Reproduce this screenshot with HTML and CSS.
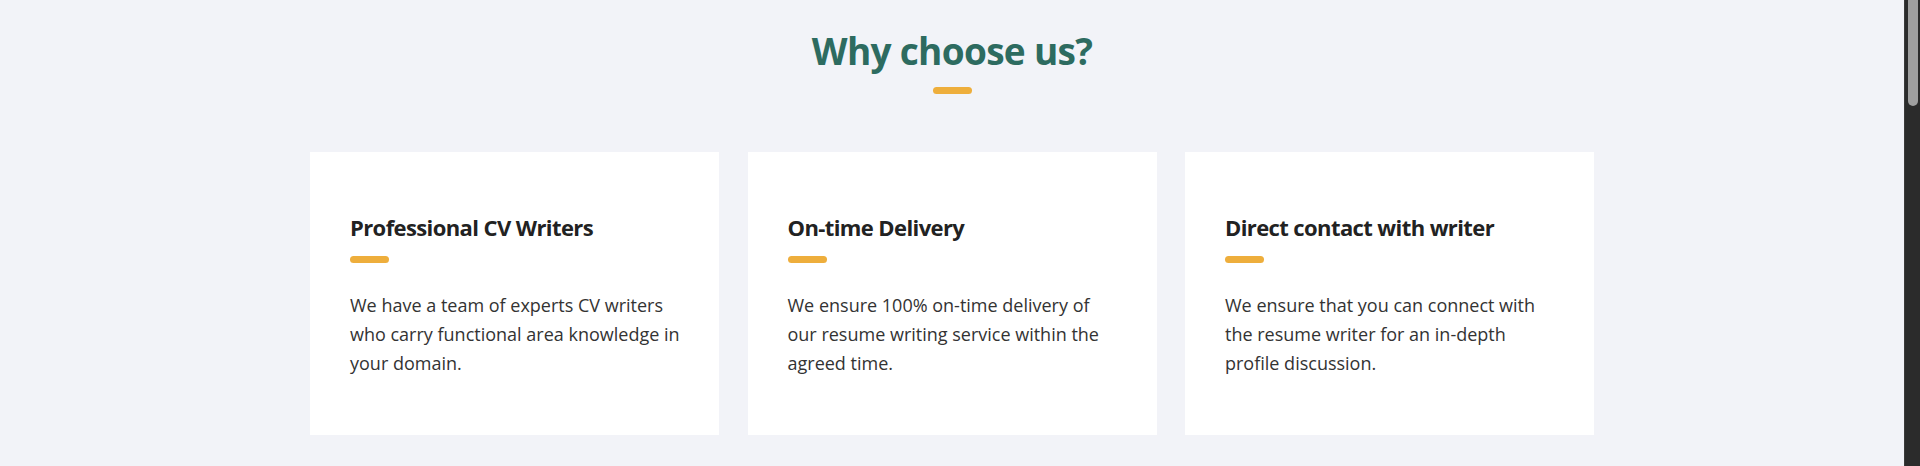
FILE: index.html
```html
<!DOCTYPE html>
<html lang="en">
<head>
<meta charset="utf-8">
<title>Why choose us?</title>
<link rel="stylesheet" href="styles.css">
</head>
<body>
<section class="why">
  <div class="why-head">
    <h2 class="why-title">Why choose us?</h2>
    <span class="bar"></span>
  </div>
  <div class="cards">
    <div class="card">
      <h3 class="card-title">Professional CV Writers</h3>
      <span class="bar"></span>
      <p class="card-text">We have a team of experts CV writers who carry functional area knowledge in your domain.</p>
    </div>
    <div class="card">
      <h3 class="card-title">On-time Delivery</h3>
      <span class="bar"></span>
      <p class="card-text">We ensure 100% on-time delivery of our resume writing service within the agreed time.</p>
    </div>
    <div class="card">
      <h3 class="card-title">Direct contact with writer</h3>
      <span class="bar"></span>
      <p class="card-text">We ensure that you can connect with the resume writer for an in-depth profile discussion.</p>
    </div>
  </div>
</section>
<div class="scrollbar" aria-hidden="true"><div class="scrollbar-thumb"></div></div>
</body>
</html>
```

FILE: styles.css
```css
html {
  background: #f2f3f8;
}
body {
  margin: 0;
  padding-right: 16px;
  font-family: "Open Sans", "Liberation Sans", sans-serif;
  color: #222;
}
.why {
  padding-top: 26px;
}
.why-head {
  display: flex;
  flex-direction: column;
  align-items: center;
}
.why-title {
  margin: 0;
  font-size: 37px;
  line-height: 50px;
  font-weight: 700;
  letter-spacing: -0.7px;
  color: #2d6b60;
}
.bar {
  display: block;
  width: 39px;
  height: 7px;
  border-radius: 4px;
  background: #eeae3c;
}
.why-head .bar {
  margin-top: 11px;
}
.cards {
  width: 1284px;
  margin: 58px auto 0;
  display: grid;
  grid-template-columns: repeat(3, 1fr);
  gap: 28.5px;
}
.card {
  background: #fff;
  height: 283px;
  box-sizing: border-box;
  padding: 59.5px 36px 0 40px;
}
.card-title {
  margin: 0;
  font-size: 22px;
  line-height: 30px;
  font-weight: 700;
  letter-spacing: -0.6px;
  color: #222;
}
.card .bar {
  margin-top: 14.5px;
}
.card-text {
  margin: 27.5px 0 0;
  font-size: 18px;
  line-height: 29px;
  color: #333;
}
.scrollbar {
  position: fixed;
  top: 0;
  right: 0;
  width: 16px;
  height: 100vh;
  background: #2b2b2b;
  border-left: 1px solid #3b3b3b;
  box-sizing: border-box;
}
.scrollbar-thumb {
  margin: 0 2px 0 3px;
  height: 106px;
  background: #9f9f9f;
  border-radius: 0 0 5px 5px;
}
```
